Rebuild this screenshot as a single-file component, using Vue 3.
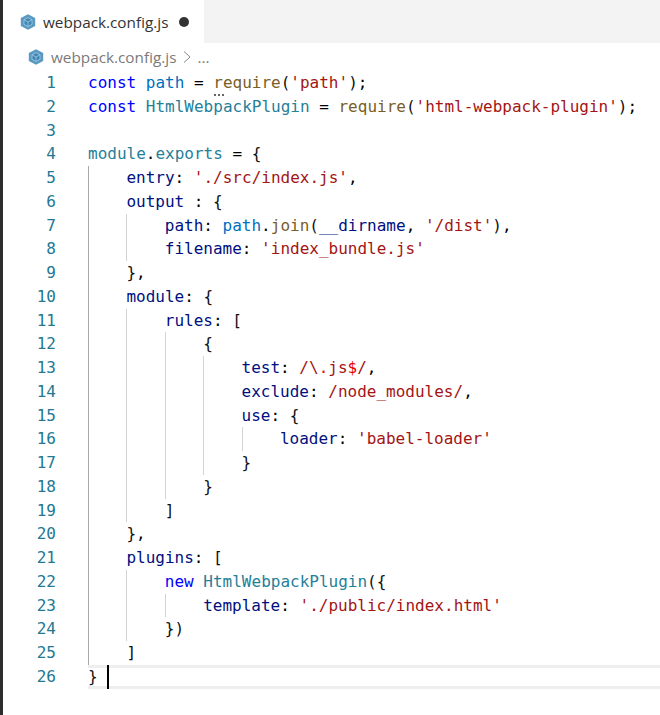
<script setup>
const K = 'k', V = 'v', F = 'f', S = 's', P = 'p', T = 't', B = 'b', R = 'r', D = 'd'
const lines = [
  { g: 0, t: [['const', K], [' '], ['path', V], [' = '], ['require', F, 'squig'], ['(', B], ["'path'", S], [')', B], [';']] },
  { g: 0, t: [['const', K], [' '], ['HtmlWebpackPlugin', T], [' = '], ['require', F], ['(', B], ["'html-webpack-plugin'", S], [')', B], [';']] },
  { g: 0, t: [] },
  { g: 0, t: [['module', T], ['.'], ['exports', T], [' = '], ['{', B]] },
  { g: 1, t: [['entry', P], [': '], ["'./src/index.js'", S], [',']] },
  { g: 1, t: [['output', P], [' : '], ['{', B]] },
  { g: 2, t: [['path', P], [': '], ['path', V], ['.'], ['join', F], ['(', B], ['__dirname', D], [', '], ["'/dist'", S], [')', B], [',']] },
  { g: 2, t: [['filename', P], [': '], ["'index_bundle.js'", S]] },
  { g: 1, t: [['}', B], [',']] },
  { g: 1, t: [['module', P], [': '], ['{', B]] },
  { g: 2, t: [['rules', P], [': '], ['[', B]] },
  { g: 3, t: [['{', B]] },
  { g: 4, t: [['test', P], [': '], ['/\\', S], ['.', R], ['js', S], ['$', R], ['/', S], [',']] },
  { g: 4, t: [['exclude', P], [': '], ['/node_modules/', S], [',']] },
  { g: 4, t: [['use', P], [': '], ['{', B]] },
  { g: 5, t: [['loader', P], [': '], ["'babel-loader'", S]] },
  { g: 4, t: [['}', B]] },
  { g: 3, t: [['}', B]] },
  { g: 2, t: [[']', B]] },
  { g: 1, t: [['}', B], [',']] },
  { g: 1, t: [['plugins', P], [': '], ['[', B]] },
  { g: 2, t: [['new', K], [' '], ['HtmlWebpackPlugin', T], ['({', B]] },
  { g: 3, t: [['template', P], [': '], ["'./public/index.html'", S]] },
  { g: 2, t: [['})', B]] },
  { g: 1, t: [[']', B]] },
  { g: 0, t: [['}', B]], cur: 1 },
]
</script>

<template>
  <div class="win">
    <div class="strip"></div>
    <div class="main">
      <div class="tabs">
        <div class="tab">
          <svg class="ico" viewBox="0 0 16 16" width="16" height="16">
            <path d="M8 .2 15.2 4.1v7.8L8 15.8.8 11.9V4.1Z" fill="#5a9ac2" />
            <path d="M8 3.6 12 5.8v4.5L8 12.5 4 10.3V5.8Z" fill="#3f86b4" stroke="#a5cbe2" stroke-width=".8" />
            <path d="M4 5.8 8 8l4-2.2M8 8v4.5" stroke="#a5cbe2" stroke-width=".8" fill="none" />
          </svg>
          <span class="tabname">webpack.config.js</span>
          <span class="dot"></span>
        </div>
        <div class="tabfill"></div>
      </div>
      <div class="crumbs">
        <svg class="ico" viewBox="0 0 16 16" width="16" height="16">
          <path d="M8 .2 15.2 4.1v7.8L8 15.8.8 11.9V4.1Z" fill="#5a9ac2" />
          <path d="M8 3.6 12 5.8v4.5L8 12.5 4 10.3V5.8Z" fill="#3f86b4" stroke="#a5cbe2" stroke-width=".8" />
          <path d="M4 5.8 8 8l4-2.2M8 8v4.5" stroke="#a5cbe2" stroke-width=".8" fill="none" />
        </svg>
        <span class="crumbname">webpack.config.js</span>
        <svg class="chev" viewBox="0 0 8 14" width="8" height="14"><path d="M1 1.5 7 7 1 12.5" fill="none" stroke="#8a8a8a" stroke-width="1" /></svg>
        <span class="crumbname">...</span>
      </div>
      <div class="editor">
        <div v-for="(l, n) in lines" :key="n" class="line" :class="{ current: l.cur }">
          <span class="num">{{ n + 1 }}</span>
          <span class="code">
            <span v-for="g in l.g" :key="g" class="guide" :class="{ first: g === 1 }"></span>
            <span v-for="(p, i) in l.t" :key="i" :class="[p[1], p[2]]">{{ p[0] }}</span>
            <span v-if="l.cur" class="cursor"></span>
          </span>
        </div>
      </div>
    </div>
  </div>
</template>

<style>
html, body { margin: 0; background: #fff; }
</style>

<style scoped>
.win { display: flex; width: 660px; height: 715px; background: #fff; overflow: hidden; }
.strip { width: 3px; flex: none; background: #2d2d2d; }
.main { flex: 1; min-width: 0; display: flex; flex-direction: column; }
.tabs { display: flex; height: 43px; flex: none; }
.tab { width: 201px; display: flex; align-items: center; padding-left: 17px; padding-top: 1px; box-sizing: border-box; }
.tabfill { flex: 1; background: #f3f3f3; }
.tabname { font: 15.3px "Open Sans", "Noto Sans", sans-serif; color: #333; margin-left: 7px; }
.dot { width: 10px; height: 10px; border-radius: 50%; background: #333; margin-left: 11px; margin-top: -1px; }
.crumbs { height: 28px; display: flex; align-items: center; padding-left: 25px; padding-bottom: 1px; box-sizing: border-box; flex: none; }
.crumbname { font: 15.3px "Open Sans", "Noto Sans", sans-serif; color: #7a7a7a; }
.crumbs .ico + .crumbname { margin-left: 7px; }
.chev { margin: 0 6px 0 7px; }
.editor { flex: 1; }
.line { display: flex; height: 23.76px; font: 16px/23.76px "DejaVu Sans Mono", monospace; color: #000; white-space: pre; box-sizing: border-box; }
.num { width: 53px; text-align: right; color: #237893; flex: none; }
.code { margin-left: 32px; flex: 1; display: flex; height: 100%; position: relative; }
.current .code { box-shadow: inset 0 3px 0 #eee, inset 0 -3px 0 #eee; }
.guide { width: 38.4px; flex: none; box-sizing: border-box; border-left: 1px solid #d3d3d3; height: 100%; }
.guide.first { border-left: 1px solid #a9a9a9; }
.cursor { width: 2px; height: 100%; background: #000; margin-left: 9px; }
.k { color: #0000ff; }
.v { color: #0070c1; }
.f { color: #795e26; }
.s { color: #a31515; }
.p { color: #001080; }
.t { color: #267f99; }
.d { color: #001080; }
.b { color: #111; }
.r { color: #ee0000; }
.squig { position: relative; }
.squig::after { content: ""; position: absolute; left: 0; bottom: -1px; width: 12px; height: 2px; background-image: radial-gradient(circle, #666 1px, transparent 1px); background-size: 4px 2px; }
</style>
